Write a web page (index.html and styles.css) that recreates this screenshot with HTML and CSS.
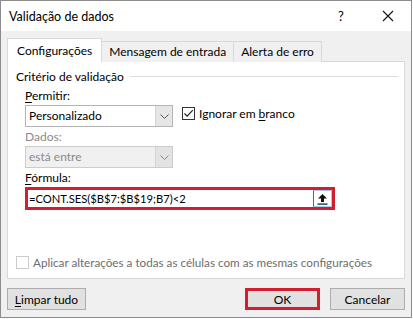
FILE: index.html
```html
<!DOCTYPE html>
<html lang="pt">
  <head>
    <meta charset="UTF-8" />
    <title>Validação de dados</title>
    <link rel="stylesheet" href="styles.css">
  </head>
  <body>
    <div class="window">
      <div class="titlebar">
        <span class="title">Validação de dados</span>
        <span class="help">?</span>
        <svg class="close" width="12" height="12" viewBox="0 0 12 12">
          <path d="M1 1 L11 11 M11 1 L1 11" stroke="#111" stroke-width="1.1" fill="none" />
        </svg>
      </div>

      <div class="content">
        <div class="tabs">
          <div class="tab active">Configurações</div>
          <div class="tab">Mensagem de entrada</div>
          <div class="tab">Alerta de erro</div>
        </div>

        <div class="panel">
          <div class="group-title">
            <span>Critério de validação</span>
            <span class="rule"></span>
          </div>

          <div class="fields">
            <div class="label"><u>P</u>ermitir:</div>
            <div class="row">
              <div class="select">
                <span class="value">Personalizado</span>
                <span class="arrow">
                  <svg width="9" height="5" viewBox="0 0 9 5"><path d="M0.5 0.5 L4.5 4.5 L8.5 0.5" stroke="#555" fill="none" /></svg>
                </span>
              </div>
              <label class="check">
                <span class="box">
                  <svg width="11" height="11" viewBox="0 0 11 11"><path d="M1.5 5.5 L4.2 8.2 L9.8 2.2" stroke="#222" stroke-width="1.2" fill="none" /></svg>
                </span>
                <span>Ignorar em <u>b</u>ranco</span>
              </label>
            </div>

            <div class="label disabled">Dados:</div>
            <div class="select off">
              <span class="value">está entre</span>
              <span class="arrow">
                <svg width="9" height="5" viewBox="0 0 9 5"><path d="M0.5 0.5 L4.5 4.5 L8.5 0.5" stroke="#888" fill="none" /></svg>
              </span>
            </div>

            <div class="label"><u>F</u>órmula:</div>
            <div class="formula">
              <span class="text">=CONT.SES($B$7:$B$19;B7)&lt;2</span>
              <span class="pick">
                <svg width="11" height="12" viewBox="0 0 11 12"><path d="M5.5 1 L10 5.5 L7 5.5 L7 9 L4 9 L4 5.5 L1 5.5 Z" fill="#111" /><rect x="0.5" y="10.5" width="10" height="1.2" fill="#111" /></svg>
              </span>
            </div>
          </div>

          <label class="apply">
            <span class="box"></span>
            <span>Aplicar alterações a todas as células com as mesmas configurações</span>
          </label>
        </div>

        <div class="buttons">
          <button class="btn"><u>L</u>impar tudo</button>
          <span class="spacer"></span>
          <button class="btn ok">OK</button>
          <button class="btn">Cancelar</button>
        </div>
      </div>
    </div>
  </body>
</html>
```

FILE: styles.css
```css
:root {
  --face: #f0f0f0;
  --line: #d9d9d9;
  --red: #d21f2f;
  --muted: #8a8a8a;
}

* {
  box-sizing: border-box;
}

body {
  margin: 0;
  background: #ffffff;
  font-family: Lato, "Noto Sans", sans-serif;
  font-size: 12px;
  color: #000;
}

u {
  text-decoration-thickness: 1px;
  text-underline-offset: 2px;
}

.window {
  width: 412px;
  height: 318px;
  border: 1px solid #8c8c8c;
  background: var(--face);
}

.titlebar {
  height: 30px;
  background: #fff;
  display: flex;
  align-items: center;
  padding-left: 8px;
  font-size: 12.5px;
}

.title {
  flex: 1;
}

.help {
  width: 14px;
  margin-right: 30px;
  font-size: 13px;
}

.close {
  margin-right: 17px;
}

.content {
  padding: 7px 6px 0 6px;
}

.tabs {
  display: flex;
  align-items: flex-end;
  height: 24px;
  margin-bottom: -1px;
  position: relative;
}

.tab {
  height: 21px;
  padding: 0 7px;
  border: 1px solid var(--line);
  border-bottom: none;
  border-left: none;
  line-height: 20px;
  background: var(--face);
}

.tab.active {
  height: 24px;
  padding: 0 9px;
  border-left: 1px solid var(--line);
  background: #fff;
  line-height: 23px;
}

.panel {
  height: 218px;
  width: 398px;
  background: #fff;
  border: 1px solid var(--line);
  padding: 6px 6px 0 8px;
  display: flex;
  flex-direction: column;
}

.group-title {
  display: flex;
  align-items: center;
  height: 16px;
  gap: 6px;
}

.rule {
  flex: 1;
  height: 1px;
  background: #dcdcdc;
}

.fields {
  padding-left: 9px;
  padding-top: 4px;
}

.label {
  line-height: 16px;
  height: 17px;
}

.label.disabled {
  color: var(--muted);
}

.row {
  display: flex;
  align-items: flex-start;
  gap: 9px;
}

.select {
  width: 148px;
  height: 22px;
  border: 1px solid #b4b4b4;
  background: #fff;
  display: flex;
  margin-bottom: 2px;
}

.select .value {
  flex: 1;
  padding-left: 3px;
  line-height: 20px;
}

.select .arrow {
  width: 17px;
  background: #e6e6e6;
  border-left: 1px solid #d4d4d4;
  display: flex;
  align-items: center;
  justify-content: center;
}

.select.off {
  background: #f0f0f0;
  border-color: #cccccc;
  color: var(--muted);
}

.select.off .arrow {
  background: #e3e3e3;
}

.check {
  display: flex;
  align-items: center;
  gap: 4px;
  margin-top: 1px;
}

.box {
  width: 13px;
  height: 13px;
  border: 1px solid #333;
  background: #fff;
  display: flex;
  align-items: center;
  justify-content: center;
}

.formula {
  width: 310px;
  height: 23px;
  border: 3px solid var(--red);
  display: flex;
  background: #fff;
}

.formula .text {
  flex: 1;
  padding-left: 1px;
  line-height: 17px;
  font-size: 11.2px;
}

.formula .pick {
  width: 19px;
  border: 1px solid #9cd0f5;
  border-left: 1px solid #3a6ea5;
  display: flex;
  align-items: center;
  justify-content: center;
}

.apply {
  margin-top: auto;
  margin-bottom: 9px;
  display: flex;
  align-items: center;
  gap: 4px;
  color: #6d6d6d;
  white-space: nowrap;
  font-size: 11.7px;
}

.apply .box {
  border-color: #cccccc;
}

.buttons {
  display: flex;
  margin-top: 9px;
  gap: 10px;
}

.spacer {
  flex: 1;
}

.btn {
  height: 22px;
  width: 79px;
  border: 1px solid #adadad;
  background: #e1e1e1;
  font-family: inherit;
  font-size: 12px;
  color: #000;
  padding: 0;
}

.btn.ok {
  width: 75px;
  border: 3px solid var(--red);
}

.btn:last-child {
  width: 75px;
}
```
